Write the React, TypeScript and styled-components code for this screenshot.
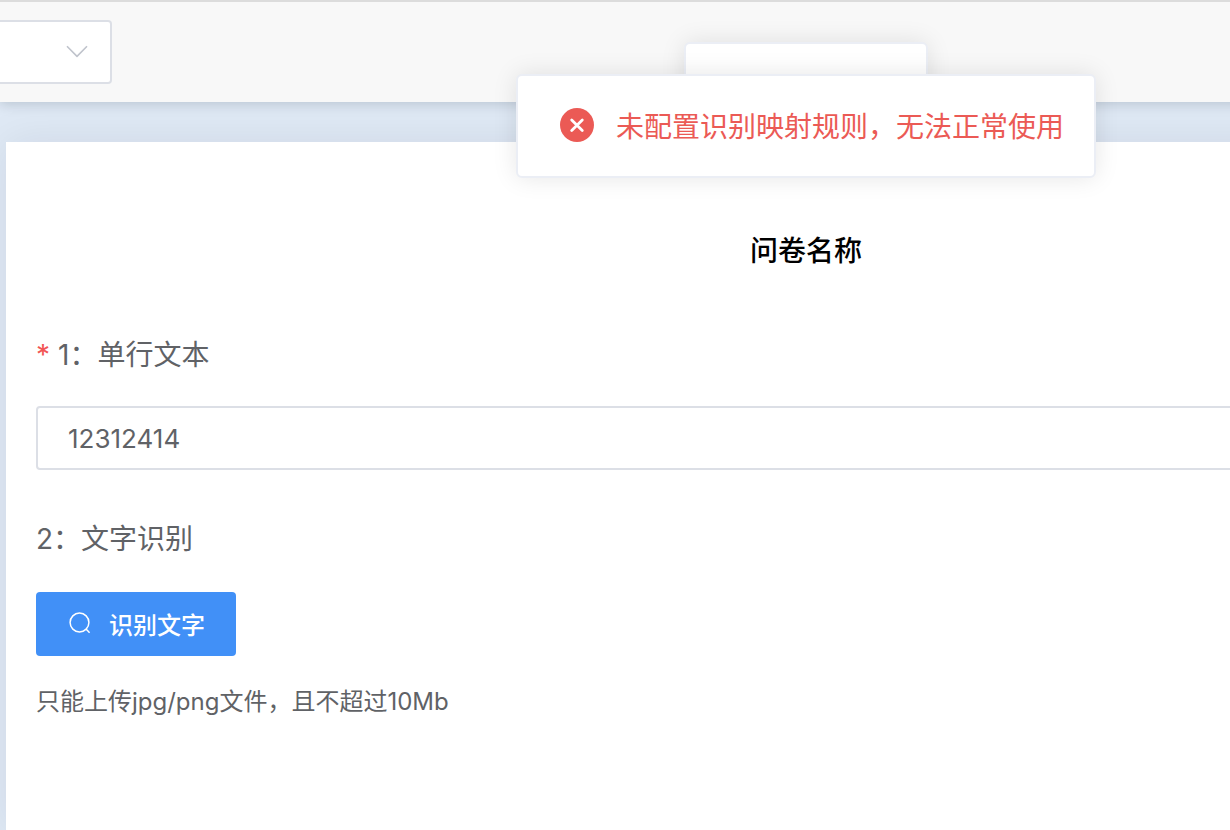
import React from "react";
import styled, { createGlobalStyle } from "styled-components";

const GlobalStyle = createGlobalStyle`
  * { box-sizing: border-box; }
  body {
    margin: 0;
    background: #dfe9f5;
    color: #606266;
    font-family: Inter, "Noto Sans CJK SC", sans-serif;
    font-size: 28px;
  }
`;

const Viewport = styled.div`
  overflow: hidden;
`;

/* The survey canvas is wider than the window and runs off its right edge. */
const Page = styled.div`
  position: relative;
  display: flex;
  flex-direction: column;
  width: calc(100% + 382px);
  min-height: 100vh;
`;

const TopBar = styled.header`
  position: relative;
  padding: 18px 0;
  border-top: 2px solid #dcdcdc;
  background: #f8f8f8;
  box-shadow: 0 2px 12px rgba(0, 21, 41, 0.18);
`;

const SelectBox = styled.div`
  position: relative;
  width: 112px;
  height: 64px;
`;

const Select = styled.select`
  appearance: none;
  width: 100%;
  height: 100%;
  border: 2px solid #dcdfe6;
  border-left: 0;
  border-radius: 0 4px 4px 0;
  background: #fff;
`;

const Chevron = styled.svg`
  position: absolute;
  top: 24px;
  right: 24px;
  width: 22px;
  height: 16px;
  pointer-events: none;
`;

const Card = styled.main`
  flex: 1;
  margin: 40px 6px 0;
  padding: 89px 30px 40px;
  background: #fff;
  box-shadow: 0 0 40px rgba(0, 21, 41, 0.08);
`;

const Title = styled.h1`
  margin: 0 0 64px;
  color: #000;
  font-size: 28px;
  font-weight: 500;
  line-height: 40px;
  text-align: center;
`;

const Question = styled.section`
  display: flex;
  flex-direction: column;
  align-items: flex-start;
  margin-bottom: 49px;
`;

const Label = styled.label`
  display: flex;
  gap: 8px;
  margin-bottom: 31px;
  line-height: 40px;
`;

const Required = styled.span`
  color: #f25555;
`;

const TextInput = styled.input`
  width: 100%;
  height: 64px;
  padding: 0 30px;
  border: 2px solid #dcdfe6;
  border-radius: 4px;
  background: #fff;
  color: #606266;
  font: inherit;
  font-size: 26px;
  outline: none;
`;

const Upload = styled.div`
  padding-top: 2px;
`;

const UploadButton = styled.button`
  display: flex;
  align-items: center;
  gap: 17px;
  height: 64px;
  padding: 0 31px 2px 32px;
  border: 0;
  border-radius: 4px;
  background: #4190f7;
  color: #fff;
  font: inherit;
  font-size: 24px;
  font-weight: 500;
`;

const Hint = styled.p`
  margin: 28px 0 0;
  font-size: 24px;
  line-height: 36px;
`;

const Toast = styled.div<{ $top: number; $width: number }>`
  position: absolute;
  top: ${(p) => p.$top}px;
  left: 50%;
  display: flex;
  align-items: center;
  gap: 22px;
  width: ${(p) => p.$width}px;
  height: 104px;
  margin-left: -${(p) => p.$width / 2}px;
  padding: 0 30px 2px 42px;
  border: 2px solid #ebeef5;
  border-radius: 6px;
  background: #fff;
  box-shadow: 0 0 24px rgba(0, 0, 0, 0.1);
  color: #eb5a55;
  white-space: nowrap;
`;

export default function App() {
  return (
    <Viewport>
      <GlobalStyle />
      <Page>
        <TopBar>
          <SelectBox>
            <Select aria-label="选项" defaultValue="">
              <option value="" />
            </Select>
            <Chevron viewBox="0 0 22 16" fill="none" stroke="#c0c4cc" strokeWidth="1.6">
              <path d="M1 2.2 11 12.4 21 2.2" strokeLinejoin="round" />
            </Chevron>
          </SelectBox>
        </TopBar>
        <Card>
          <Title>问卷名称</Title>
          <Question>
            <Label htmlFor="single-line">
              <Required>*</Required>
              <span>1：单行文本</span>
            </Label>
            <TextInput id="single-line" type="text" defaultValue="12312414" />
          </Question>
          <Question>
            <Label htmlFor="recognise">2：文字识别</Label>
            <Upload>
              <UploadButton id="recognise" type="button">
                <svg width="24" height="24" viewBox="0 0 24 24" fill="none" stroke="#fff" strokeWidth="1.5">
                  <circle cx="11.5" cy="11.5" r="9.4" />
                  <path d="m18 18 3.6 3.8" />
                </svg>
                识别文字
              </UploadButton>
              <Hint>只能上传jpg/png文件，且不超过10Mb</Hint>
            </Upload>
          </Question>
        </Card>
        <Toast $top={42} $width={244} aria-hidden="true" />
        <Toast $top={74} $width={580} role="alert">
          <svg width="34" height="34" viewBox="0 0 34 34">
            <circle cx="17" cy="17" r="17" fill="#eb5a55" />
            <path d="m11.7 12 10.6 10.6M22.3 12 11.7 22.6" stroke="#fff" strokeWidth="2.8" strokeLinecap="round" />
          </svg>
          <span>未配置识别映射规则，无法正常使用</span>
        </Toast>
      </Page>
    </Viewport>
  );
}
